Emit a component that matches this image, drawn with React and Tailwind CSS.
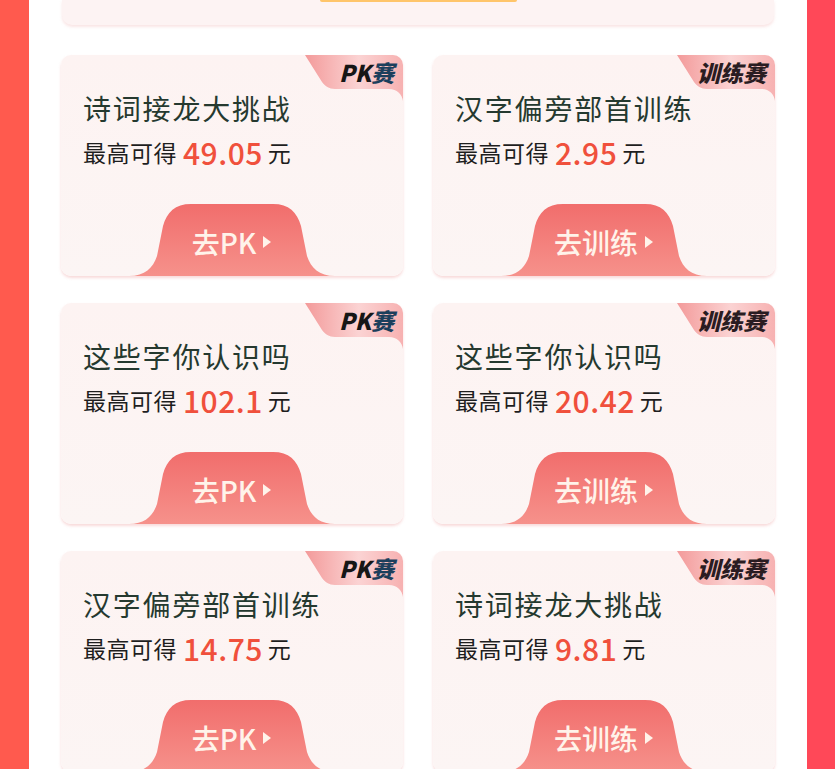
const cards = [
  { title: "诗词接龙大挑战", amount: "49.05", pk: true },
  { title: "汉字偏旁部首训练", amount: "2.95", pk: false },
  { title: "这些字你认识吗", amount: "102.1", pk: true },
  { title: "这些字你认识吗", amount: "20.42", pk: false },
  { title: "汉字偏旁部首训练", amount: "14.75", pk: true },
  { title: "诗词接龙大挑战", amount: "9.81", pk: false },
];

const font = { fontFamily: '"Noto Sans CJK SC", "Noto Sans", sans-serif' };

const Tab = ({ pk }) => (
  <div className="absolute top-0 right-0 w-[98px] h-[46px]">
    <svg width="98" height="46" viewBox="0 0 98 46" className="absolute inset-0">
      <defs>
        <linearGradient id="tabg" x1="0" y1="0" x2="1" y2="0">
          <stop offset="0" stopColor="#f39a9a" />
          <stop offset="0.55" stopColor="#fbd3d3" />
          <stop offset="1" stopColor="#f7b1b1" />
        </linearGradient>
      </defs>
      <path
        d="M0 0 H98 V46 C97 39 92 34 84 34 H30 C24 34 20 31 17 27 Z"
        fill="url(#tabg)"
      />
    </svg>
    <div className="relative flex justify-end pr-[9px] pt-[2px]">
      {pk ? (
        <span className="italic font-black text-[23px] leading-[30px]">
          <span className="text-[#161616]">PK</span>
          <span className="text-[#1c3f5c]">赛</span>
        </span>
      ) : (
        <span className="italic font-black text-[23px] leading-[30px] text-[#2a1c22]">训练赛</span>
      )}
    </div>
  </div>
);

const GoButton = ({ pk }) => (
  <div className="relative mt-auto mx-auto w-[206px] h-[72px] flex items-center justify-center">
    <svg width="206" height="72" viewBox="0 0 206 72" className="absolute inset-0">
      <defs>
        <linearGradient id="btng" x1="0" y1="0" x2="0" y2="1">
          <stop offset="0" stopColor="#f16d6c" />
          <stop offset="1" stopColor="#f6918b" />
        </linearGradient>
      </defs>
      <path
        d="M0 72 C16 72 24 64 28 52 L34 22 C38 8 46 0 62 0 L144 0 C160 0 168 8 172 22 L178 52 C182 64 190 72 206 72 Z"
        fill="url(#btng)"
      />
    </svg>
    <div className="relative flex items-center gap-[6px] pt-[4px] text-[#fff3ea] text-[28px] font-medium leading-[34px]">
      <span>{pk ? "去PK" : "去训练"}</span>
      <svg width="10" height="14" viewBox="0 0 10 14">
        <path d="M1 1 L9 7 L1 13 Z" fill="#fff3ea" />
      </svg>
    </div>
  </div>
);

const Card = ({ card }) => (
  <div className="relative h-[221px] rounded-[10px] overflow-hidden bg-gradient-to-b from-[#fdf3f2] to-[#fcf5f4] shadow-[0_2px_3px_rgba(236,150,150,0.35)] flex flex-col">
    <Tab pk={card.pk} />
    <div className="pl-[22px] pt-[36px]">
      <div className="text-[28px] leading-[34px] tracking-[1.8px] text-[#25392f]">{card.title}</div>
      <div className="mt-[11px] h-[32px] flex items-center text-[#1e1e1e]">
        <span className="text-[23px] tracking-[0.5px]">最高可得</span>
        <span className="ml-[6px] text-[30px] font-medium text-[#f0503c] tracking-[0.5px]">{card.amount}</span>
        <span className="ml-[5px] text-[23px]">元</span>
      </div>
    </div>
    <GoButton pk={card.pk} />
  </div>
);

export default function App() {
  return (
    <div className="w-[835px] h-[769px] overflow-hidden flex" style={font}>
      <div className="w-[29px] bg-[#ff5a4e]" />
      <div className="flex-1 bg-white flex flex-col">
        <div className="mx-[33px] h-[25px] shrink-0 rounded-b-[10px] bg-[#fdf3f3] shadow-[0_2px_3px_rgba(236,150,150,0.25)] flex justify-center">
          <div className="w-[197px] h-[2px] rounded-b-full bg-[#ffc56a]" />
        </div>
        <div className="mt-[30px] px-[32px] grid grid-cols-2 gap-x-[30px] gap-y-[27px] shrink-0">
          {cards.map((c, i) => (
            <Card key={i} card={c} />
          ))}
        </div>
      </div>
      <div className="w-[28px] bg-[#ff4858]" />
    </div>
  );
}
